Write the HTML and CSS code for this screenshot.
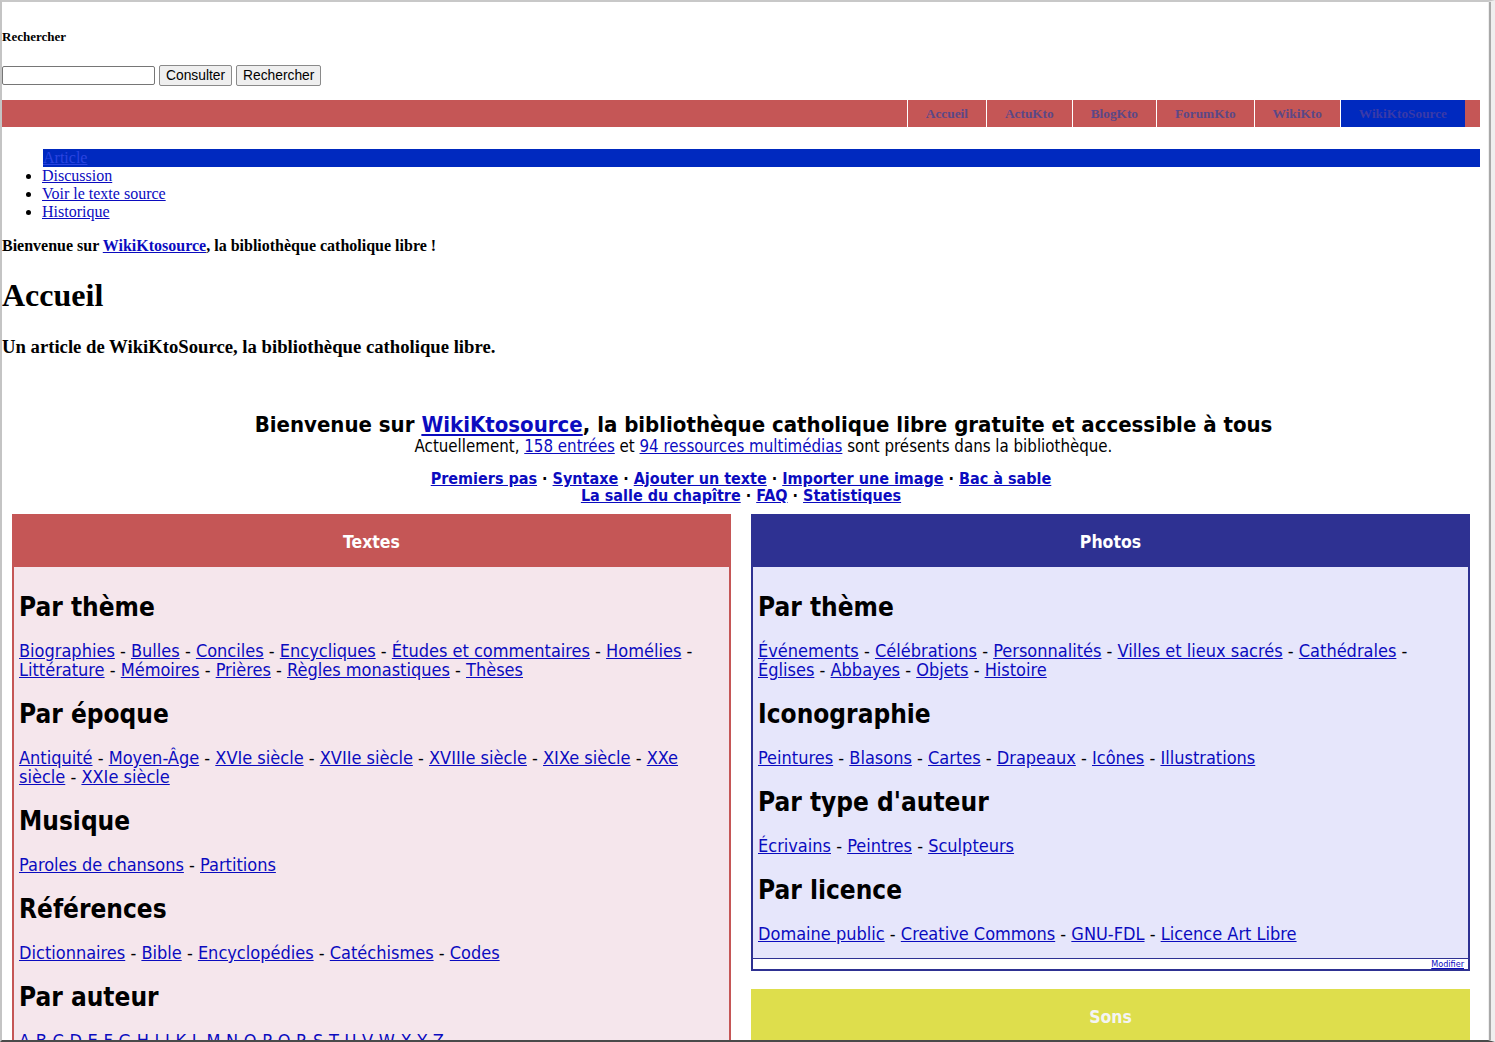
FILE: index.html
```html
<!DOCTYPE html>
<html lang="fr">
<head>
<meta charset="utf-8">
<title>Accueil - WikiKtoSource</title>
<link rel="stylesheet" href="styles.css">
</head>
<body>
<div class="frame"></div>
<div class="page">
  <h5 class="search-title">Rechercher</h5>
  <form class="search">
    <input class="search-input" type="text">
    <button type="button" class="btn">Consulter</button>
    <button type="button" class="btn">Rechercher</button>
  </form>
  <div class="navbar">
    <a class="tab">Accueil</a><a class="tab">ActuKto</a><a class="tab">BlogKto</a><a class="tab">ForumKto</a><a class="tab">WikiKto</a><a class="tab tab-active">WikiKtoSource</a>
  </div>
  <ul class="actions">
    <li class="selected"><a href="#">Article</a></li>
    <li><a href="#">Discussion</a></li>
    <li><a href="#">Voir le texte source</a></li>
    <li><a href="#">Historique</a></li>
  </ul>
  <p class="welcome">Bienvenue sur <a href="#">WikiKtosource</a>, la bibliothèque catholique libre !</p>
  <h1 class="title">Accueil</h1>
  <h3 class="subtitle">Un article de WikiKtoSource, la bibliothèque catholique libre.</h3>

  <div class="intro">
    <div class="intro-main">
      <div class="intro-title">Bienvenue sur <a href="#">WikiKtosource</a>, la bibliothèque catholique libre gratuite et accessible à tous</div>
      <div class="intro-count">Actuellement, <a href="#">158 entrées</a> et <a href="#">94 ressources multimédias</a> sont présents dans la bibliothèque.</div>
    </div>
    <div class="intro-links">
      <a href="#">Premiers pas</a> · <a href="#">Syntaxe</a> · <a href="#">Ajouter un texte</a> · <a href="#">Importer une image</a> · <a href="#">Bac à sable</a><br>
      <a href="#">La salle du chapître</a> · <a href="#">FAQ</a> · <a href="#">Statistiques</a>
    </div>
  </div>

  <div class="columns">
    <div class="col">
      <div class="box box-red">
        <div class="box-head">Textes</div>
        <div class="box-body">
          <h2>Par thème</h2>
          <p><a href="#">Biographies</a> - <a href="#">Bulles</a> - <a href="#">Conciles</a> - <a href="#">Encycliques</a> - <a href="#">Études et commentaires</a> - <a href="#">Homélies</a> - <a href="#">Littérature</a> - <a href="#">Mémoires</a> - <a href="#">Prières</a> - <a href="#">Règles monastiques</a> - <a href="#">Thèses</a></p>
          <h2>Par époque</h2>
          <p><a href="#">Antiquité</a> - <a href="#">Moyen-Âge</a> - <a href="#">XVIe siècle</a> - <a href="#">XVIIe siècle</a> - <a href="#">XVIIIe siècle</a> - <a href="#">XIXe siècle</a> - <a href="#">XXe siècle</a> - <a href="#">XXIe siècle</a></p>
          <h2>Musique</h2>
          <p><a href="#">Paroles de chansons</a> - <a href="#">Partitions</a></p>
          <h2>Références</h2>
          <p><a href="#">Dictionnaires</a> - <a href="#">Bible</a> - <a href="#">Encyclopédies</a> - <a href="#">Catéchismes</a> - <a href="#">Codes</a></p>
          <h2>Par auteur</h2>
          <p class="alpha"><a href="#">A</a> <a href="#">B</a> <a href="#">C</a> <a href="#">D</a> <a href="#">E</a> <a href="#">F</a> <a href="#">G</a> <a href="#">H</a> <a href="#">I</a> <a href="#">J</a> <a href="#">K</a> <a href="#">L</a> <a href="#">M</a> <a href="#">N</a> <a href="#">O</a> <a href="#">P</a> <a href="#">Q</a> <a href="#">R</a> <a href="#">S</a> <a href="#">T</a> <a href="#">U</a> <a href="#">V</a> <a href="#">W</a> <a href="#">X</a> <a href="#">Y</a> <a href="#">Z</a></p>
        </div>
      </div>
    </div>
    <div class="col">
      <div class="box box-blue">
        <div class="box-head">Photos</div>
        <div class="box-body">
          <h2>Par thème</h2>
          <p><a href="#">Événements</a> - <a href="#">Célébrations</a> - <a href="#">Personnalités</a> - <a href="#">Villes et lieux sacrés</a> - <a href="#">Cathédrales</a> - <a href="#">Églises</a> - <a href="#">Abbayes</a> - <a href="#">Objets</a> - <a href="#">Histoire</a></p>
          <h2>Iconographie</h2>
          <p><a href="#">Peintures</a> - <a href="#">Blasons</a> - <a href="#">Cartes</a> - <a href="#">Drapeaux</a> - <a href="#">Icônes</a> - <a href="#">Illustrations</a></p>
          <h2>Par type d'auteur</h2>
          <p><a href="#">Écrivains</a> - <a href="#">Peintres</a> - <a href="#">Sculpteurs</a></p>
          <h2>Par licence</h2>
          <p><a href="#">Domaine public</a> - <a href="#">Creative Commons</a> - <a href="#">GNU-FDL</a> - <a href="#">Licence Art Libre</a></p>
        </div>
        <div class="box-foot"><a href="#">Modifier</a></div>
      </div>
      <div class="box box-yellow">
        <div class="box-head">Sons</div>
        <div class="box-body"></div>
      </div>
    </div>
  </div>
</div>
</body>
</html>
```
FILE: styles.css
```css
html, body {
  margin: 0;
  padding: 0;
  background: #ffffff;
}
body {
  font-family: "Liberation Serif", "Times New Roman", serif;
  color: #000;
  overflow: hidden;
}
.frame {
  position: fixed;
  inset: 0;
  pointer-events: none;
  border-top: 2px solid #c8c8c8;
  border-left: 2px solid #c4c4c4;
  border-bottom: 2px solid #4a4a4a;
  border-right: 7px solid #efefef;
  z-index: 10;
}
.frame::after {
  content: "";
  position: absolute;
  top: 0;
  bottom: 0;
  right: -3px;
  width: 2px;
  background: #a8a8a8;
}
.page {
  width: 1478px;
  padding: 7px 0 0 2px;
}
a { color: #0b0bbf; }

.search-title {
  font-size: 13px;
  font-weight: bold;
  margin: 22px 0 20px;
}
.search {
  display: flex;
  align-items: center;
  gap: 4px;
  margin: 0;
}
.search-input {
  width: 147px;
  height: 15px;
  padding: 1px 2px;
  border: 1px solid #767676;
  border-radius: 2px;
  font-size: 13px;
  margin: 0;
}
.btn {
  font-family: "Liberation Sans", Arial, sans-serif;
  font-size: 13.8px;
  padding: 1px 6px;
  height: 21px;
  border: 1px solid #8a8a8a;
  border-radius: 2px;
  background: #efefef;
  color: #000;
  margin: 0;
}

.navbar {
  margin-top: 14px;
  height: 27px;
  background: #c55656;
  display: flex;
  justify-content: flex-end;
  padding-right: 15px;
}
.tab {
  display: flex;
  align-items: center;
  padding: 0 18px;
  border-left: 1px solid #ffffff;
  font-weight: bold;
  font-size: 13.3px;
  color: #5b4887;
  text-decoration: none;
}
.tab-active {
  background: #0029bf;
  color: #3a3aa8;
}

.actions {
  margin: 22px 0 0;
  padding-left: 40px;
  font-size: 16px;
  line-height: 18px;
}
.actions li.selected {
  list-style: none;
  background: #0029bf;
  margin-left: 1px;
}
.actions li.selected a { color: #2a44e0; }

.welcome {
  font-weight: bold;
  font-size: 16px;
  margin: 16px 0 0;
  line-height: 18px;
}
.title {
  font-size: 32px;
  margin: 22px 0 0;
  line-height: 37px;
}
.subtitle {
  font-size: 18.7px;
  margin: 22px 0 0;
  line-height: 22px;
}

.intro {
  margin-top: 54px;
  font-family: "DejaVu Sans Condensed", "DejaVu Sans", sans-serif;
  font-stretch: condensed;
  text-align: center;
}
.intro-main {
  padding-left: 45px;
}
.intro-title {
  font-size: 22px;
  font-weight: bold;
  line-height: 25px;
}
.intro-count {
  font-size: 16.75px;
  line-height: 19px;
}
.intro-links {
  margin-top: 14px;
  font-size: 16px;
  font-weight: bold;
  line-height: 17px;
}

.columns {
  display: grid;
  grid-template-columns: 1fr 1fr;
  gap: 20px;
  padding: 0 10px;
  margin-top: 10px;
  font-family: "DejaVu Sans Condensed", "DejaVu Sans", sans-serif;
  font-stretch: condensed;
}
.col {
  display: flex;
  flex-direction: column;
  gap: 18px;
}
.box {
  border: 2px solid;
}
.box-head {
  height: 51px;
  display: flex;
  align-items: center;
  justify-content: center;
  color: #ffffff;
  font-weight: bold;
  font-size: 17.5px;
}
.box-body {
  display: flow-root;
  padding: 5px 5px 0;
}
.box-body h2 {
  font-size: 26px;
  line-height: 30px;
  margin: 20px 0 19px;
}
.box-body p {
  font-size: 18px;
  line-height: 19px;
  margin: 0 0 15px;
}
.box-body p.alpha {
  word-spacing: 0.5px;
}
.box-foot {
  background: #ffffff;
  border-top: 1px solid #2e3192;
  text-align: right;
  font-size: 9px;
  line-height: 10px;
  padding-right: 4px;
}
.box-red { border-color: #c55656; }
.box-red .box-head { background: #c55656; }
.box-red .box-body { background: #f5e6ec; }
.box-blue { border-color: #2e3192; }
.box-blue .box-head { background: #2e3192; }
.box-blue .box-body { background: #e6e6fb; }
.box-yellow { border-color: #dede4c; }
.box-yellow .box-head { background: #dede4c; color: #f4f4f4; }
.box-yellow .box-body { background: #fafad8; height: 80px; }
```
